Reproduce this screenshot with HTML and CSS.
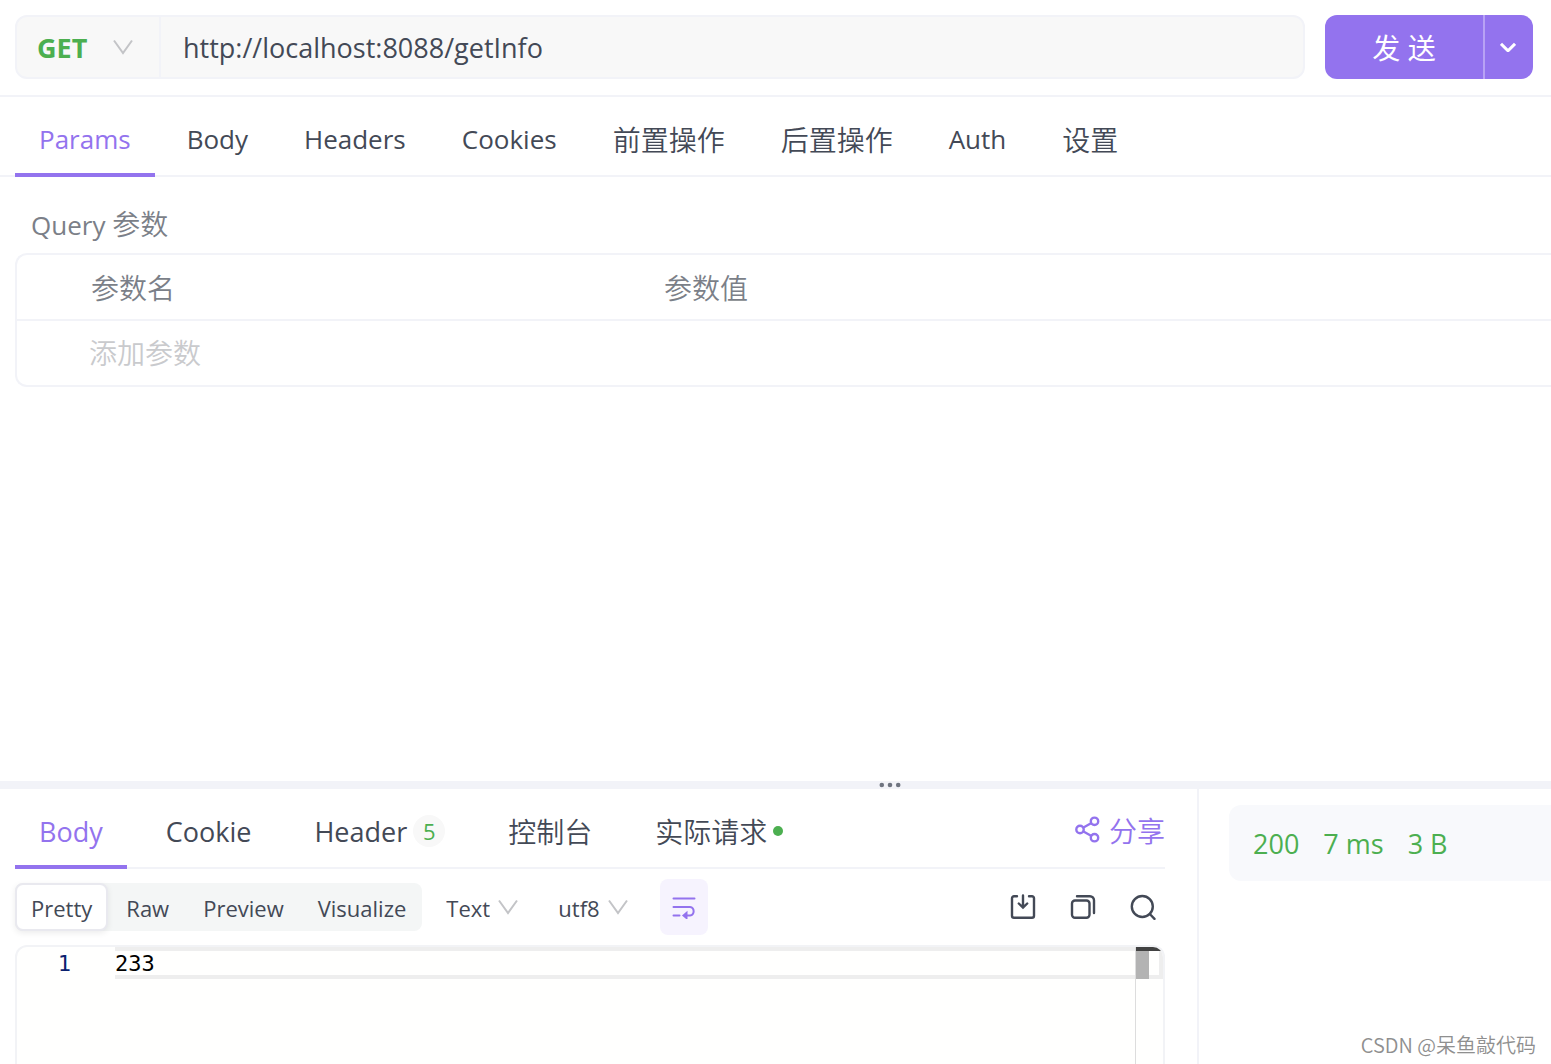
FILE: index.html
```html
<!DOCTYPE html>
<html lang="zh-CN">
<head>
    <meta charset="UTF-8">
    <meta name="viewport" content="width=device-width, initial-scale=1.0">
    <title>GET /getInfo</title>
    <link rel="stylesheet" href="styles.css">
</head>
<body>
    <main class="request">
        <form class="url-bar">
            <div class="url-box">
                <div class="method">
                    <select class="method-select" aria-label="请求方法">
                        <option>GET</option>
                        <option>POST</option>
                        <option>PUT</option>
                        <option>DELETE</option>
                    </select>
                    <svg class="arrow" viewBox="0 0 20 16"><path d="M1 1.5l9 12.5 9-12.5"/></svg>
                </div>
                <input class="url-input" type="text" value="http://localhost:8088/getInfo" aria-label="URL">
            </div>
            <div class="send">
                <button type="button" class="send-main">发 送</button>
                <button type="button" class="send-more" aria-label="更多">
                    <svg width="16" height="10" viewBox="0 0 16 10"><path d="M1 1.800l7 7 7-7"/></svg>
                </button>
            </div>
        </form>

        <nav class="tabs">
            <button class="tab active">Params</button>
            <button class="tab">Body</button>
            <button class="tab">Headers</button>
            <button class="tab">Cookies</button>
            <button class="tab zh">前置操作</button>
            <button class="tab zh">后置操作</button>
            <button class="tab">Auth</button>
            <button class="tab zh">设置</button>
        </nav>

        <section class="params">
            <h2>Query <span class="zh">参数</span></h2>
            <div class="table-wrap">
                <table>
                    <thead>
                        <tr><th class="name-col">参数名</th><th>参数值</th></tr>
                    </thead>
                    <tbody>
                        <tr>
                            <td class="name-col"><input type="text" placeholder="添加参数" aria-label="参数名"></td>
                            <td><input type="text" aria-label="参数值"></td>
                        </tr>
                    </tbody>
                </table>
            </div>
        </section>
    </main>

    <div class="splitter">
        <svg width="22" height="6" viewBox="0 0 22 6"><circle cx="2.8" cy="3" r="2.3"/><circle cx="11" cy="3" r="2.3"/><circle cx="19.2" cy="3" r="2.3"/></svg>
    </div>

    <div class="response">
        <section class="result">
            <nav class="tabs result-tabs">
                <button class="tab active">Body</button>
                <button class="tab">Cookie</button>
                <button class="tab">Header<span class="badge">5</span></button>
                <button class="tab zh">控制台</button>
                <button class="tab zh">实际请求<span class="dot"></span></button>
                <button class="share zh">
                    <svg width="26" height="28" viewBox="0 0 26 28"><circle cx="5" cy="13.5" r="3.700"/><circle cx="19.500" cy="5.300" r="3.700"/><circle cx="19.500" cy="21.700" r="3.700"/><path d="M8.500 11.500l7.500-4.200M8.500 15.500l7.500 4.200"/></svg>
                    分享
                </button>
            </nav>

            <div class="toolbar">
                <div class="segmented">
                    <button class="segment selected">Pretty</button>
                    <button class="segment">Raw</button>
                    <button class="segment">Preview</button>
                    <button class="segment">Visualize</button>
                </div>
                <div class="picker">
                    <select aria-label="格式"><option>Text</option></select>
                    <svg class="arrow" viewBox="0 0 20 16"><path d="M1 1.5l9 12.5 9-12.5"/></svg>
                </div>
                <div class="picker">
                    <select aria-label="编码"><option>utf8</option></select>
                    <svg class="arrow" viewBox="0 0 20 16"><path d="M1 1.5l9 12.5 9-12.5"/></svg>
                </div>
                <button class="wrap" aria-label="自动换行">
                    <svg width="24" height="24" viewBox="0 0 24 24"><path d="M1.5 3.5h21M1.5 12h16.5a4.3 4.3 0 0 1 0 8.500h-3M1.500 20.500h6"/><path class="solid" d="M11.500 20.500l3-2.500v5z"/></svg>
                </button>
                <div class="actions">
                    <button aria-label="下载">
                        <svg width="26" height="26" viewBox="0 0 26 26"><path d="M7 2.200H4a2 2 0 0 0-2 2v17.600a2 2 0 0 0 2 2h18a2 2 0 0 0 2-2V4.200a2 2 0 0 0-2-2h-3M13 1.500v11.500M8.800 9.500l4.200 4 4.200-4"/></svg>
                    </button>
                    <button aria-label="复制">
                        <svg width="26" height="26" viewBox="0 0 26 26"><rect x="2" y="6.500" width="17.500" height="17.300" rx="3"/><path d="M7 2.200h13a4 4 0 0 1 4 4V19"/></svg>
                    </button>
                    <button aria-label="搜索">
                        <svg width="26" height="26" viewBox="0 0 26 26"><circle cx="12.300" cy="12.500" r="10.500"/><path d="M19.800 20l4.700 4.800"/></svg>
                    </button>
                </div>
            </div>

            <div class="editor">
                <span class="line-no">1</span>
                <pre class="line">233</pre>
                <div class="ruler"><span class="ruler-mark"></span><span class="ruler-thumb"></span></div>
            </div>
        </section>

        <aside class="side">
            <div class="status">
                <span>200</span>
                <span>7 ms</span>
                <span>3 B</span>
            </div>
            <footer class="credit">CSDN @呆鱼敲代码</footer>
        </aside>
    </div>
</body>
</html>
```
FILE: styles.css
```css
* { box-sizing: border-box; }
body { margin: 0; height: 100vh; display: flex; flex-direction: column; overflow: hidden; background: #fff; color: #434956; font-family: "Open Sans", "Noto Sans CJK SC", sans-serif; font-size: 27px; }
button, input, select { font: inherit; color: inherit; background: none; border: none; padding: 0; margin: 0; outline: none; }
button { cursor: pointer; }
select { appearance: none; }
svg { fill: none; stroke: currentColor; stroke-width: 2; stroke-linecap: round; flex: none; }
.arrow { width: 20px; height: 16px; color: #c3c4c7; pointer-events: none; stroke-linecap: butt; }

/* request */
.request { flex: 1; min-height: 0; }
.url-bar { display: flex; gap: 20px; padding: 15px 18px 16px 15px; border-bottom: 2px solid #f2f3f8; }
.url-box { flex: 1; display: flex; height: 64px; background: #f8f8f8; border: 2px solid #f2f3f8; border-radius: 12px; }
.method { display: flex; align-items: center; width: 144px; padding-left: 20px; border-right: 2px solid #f2f3f8; }
.method-select { width: 76px; color: #4caf50; font-weight: 700; }
.url-input { flex: 1; min-width: 0; padding: 0 22px; }
.send { display: flex; height: 64px; width: 208px; border-radius: 12px; overflow: hidden; background: #9373ee; color: #fff; }
.send-main { flex: 1; font-size: 28px; }
.send-more { display: flex; align-items: center; justify-content: center; width: 50px; padding-right: 2px; border-left: 2px solid #b8a2f5; }
.send-more svg { stroke-width: 3; stroke-linecap: butt; }

.tabs { display: flex; gap: 8px; height: 80px; padding-left: 15px; border-bottom: 2px solid #f2f3f8; font-size: 26px; }
.tab { display: flex; align-items: center; height: 80px; padding: 4px 24px 0; white-space: nowrap; }
.tab.active { color: #9373ee; box-shadow: inset 0 -4px #9373ee; }
.zh { font-family: "Noto Sans CJK SC", sans-serif; font-size: 28px; font-weight: 350; }

.params { padding-left: 15px; color: #7b7f88; }
.params h2 { margin: 0; padding: 26px 16px 8px; font-size: 26px; line-height: 40px; font-weight: 400; }
.table-wrap { border: 2px solid #f2f3f8; border-right: none; border-radius: 12px 0 0 12px; }
table { width: 100%; border-collapse: collapse; table-layout: fixed; font-size: 28px; }
th, td { height: 65px; padding: 0; text-align: left; font-weight: 350; }
th { border-bottom: 2px solid #f2f3f8; }
.name-col { width: 647px; padding-left: 74px; }
td.name-col { padding-left: 72px; }
td input { width: 100%; }
td input::placeholder { color: #c9cacd; }

.splitter { display: flex; align-items: center; justify-content: center; height: 8px; padding-left: 229px; background: #f2f3f8; }
.splitter svg { fill: #6f7480; stroke: none; }

/* response */
.response { display: flex; height: 275px; }
.result { flex: 1; display: flex; flex-direction: column; padding: 0 32px 0 15px; border-right: 2px solid #f2f3f8; }
.result-tabs { gap: 15px; padding: 0; font-size: 27px; }
.badge { display: flex; align-items: center; justify-content: center; width: 32px; height: 32px; margin-left: 6px; border-radius: 16px; background: #f8f8f8; color: #4caf50; font-size: 22px; }
.dot { width: 10px; height: 10px; margin-left: 6px; border-radius: 5px; background: #4caf50; }
.share { display: flex; align-items: center; gap: 8px; margin-left: auto; padding-top: 4px; color: #9373ee; }
.share svg, .actions svg { stroke-width: 2.4; }

.toolbar { display: flex; align-items: center; height: 76px; font-size: 22px; }
.segmented { display: flex; gap: 2px; height: 48px; background: #f4f6f6; border-radius: 8px; }
.segment { padding: 2px 16px 0; border-radius: 8px; }
.segment.selected { background: #fff; border: 2px solid #e9e9ef; padding: 2px 14px 0; box-shadow: 0 2px 6px rgba(0, 0, 0, 0.08); }
.picker { display: flex; align-items: center; gap: 8px; margin-left: 24px; margin-right: 16px; }
.picker select { padding-top: 2px; }
.picker + .picker { margin-right: 32px; }
.wrap { display: flex; align-items: center; justify-content: center; width: 48px; height: 56px; border-radius: 8px; background: #f6f3fe; color: #9373ee; }
.solid { fill: currentColor; }
.actions { display: flex; gap: 34px; margin-left: auto; padding-right: 9px; }
.actions button { display: flex; }

.editor { flex: 1; display: flex; align-items: flex-start; background: #fffffe; border: 2px solid #f2f3f6; border-bottom: none; border-radius: 12px 12px 0 0; overflow: hidden; font-family: "DejaVu Sans Mono", monospace; font-size: 22px; line-height: 34px; position: relative; }
.line-no { width: 98px; padding-right: 44px; text-align: right; color: #0b216f; }
.line { flex: 1; margin: 0; height: 32px; border: 4px solid #eee; border-left-width: 0; font: inherit; line-height: 26px; color: #000; }
/* overview ruler, drawn over the right end of the current line */
.ruler { position: absolute; top: 0; right: 0; bottom: 0; width: 28px; border-left: 1px solid #ddd; }
.ruler-mark { display: block; height: 4px; background: #424242; }
.ruler-thumb { display: block; width: 13px; height: 28px; background: #b3b3b3; }

.side { display: flex; flex-direction: column; justify-content: space-between; width: 352px; padding: 16px 0 4px 30px; }
.status { display: flex; align-items: center; gap: 24px; height: 76px; padding-left: 24px; border-radius: 12px 0 0 12px; background: #f8f9fc; color: #4caf50; }
.credit { padding-right: 15px; text-align: right; font-family: "Noto Sans CJK SC", sans-serif; font-size: 20px; line-height: 30px; font-weight: 350; color: #8f8f8f; }
```
